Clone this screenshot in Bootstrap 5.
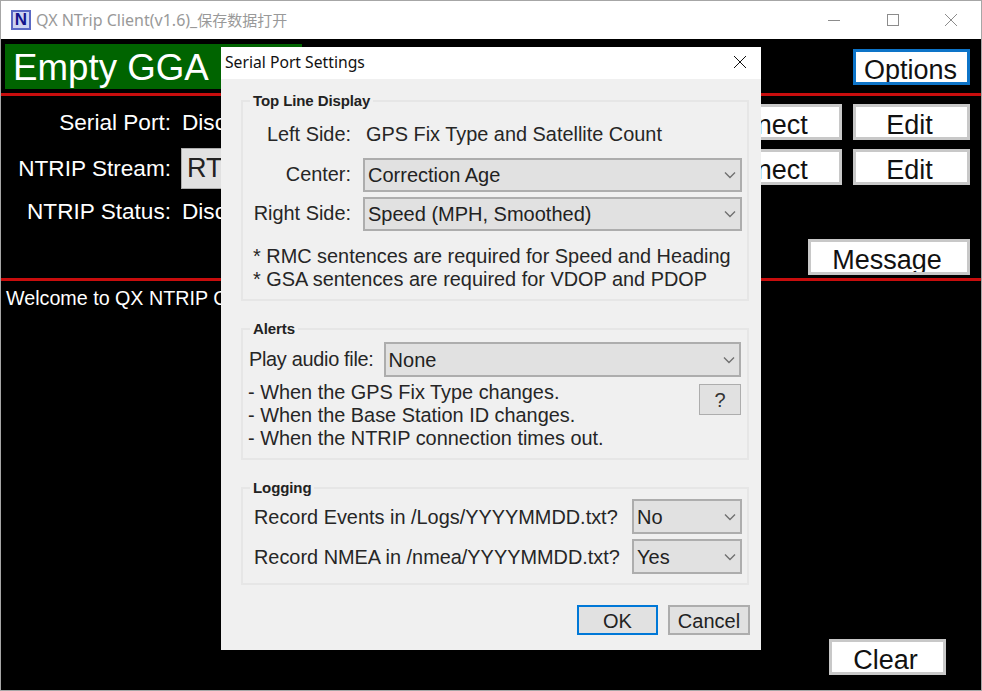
<!DOCTYPE html>
<html lang="en">
<head>
    <meta charset="UTF-8">
    <meta name="viewport" content="width=device-width, initial-scale=1.0">
    <title>QX NTrip Client</title>
    <link href="https://cdn.jsdelivr.net/npm/bootstrap@5.3.2/dist/css/bootstrap.min.css" rel="stylesheet">
    <style>
        html, body { height: 100%; overflow: hidden; background: #000; }
        body { font-family: "Liberation Sans", Arial, sans-serif; }

        /* main window */
        .app-window { width: 982px; height: 691px; border: 1px solid #a6a6a6; position: relative; overflow: hidden; }
        .title-bar { height: 38px; background: #fff; color: #999; font: 16px/36px "Noto Sans", "Noto Sans CJK SC", sans-serif; }
        .title-cjk { font-size: 15px; }
        .app-logo { width: 20px; height: 20px; margin: 0 5px 0 10px; background: #cdd3f2; border: 2px solid #5a68c4; color: #14148c; font: bold 17px/16px "Liberation Sans", sans-serif; text-align: center; }
        .win-controls { gap: 44.5px; padding-right: 23px; }
        .main-area { background: #000; color: #fff; height: 651px; }
        .top-strip { height: 54px; }
        .status-box { width: 297px; height: 45px; margin: 5px 0 0 4px; padding-left: 8px; background: #006400; font-size: 36.7px; line-height: 48px; }
        .red-rule { height: 3px; background: #c80d0d; }
        .info-row { font-size: 22.6px; padding-right: 11px; }
        .info-label { width: 170px; margin-right: 11px; text-align: right; flex-shrink: 0; }
        .text-drop { padding-top: 2px; }
        .serial-row { height: 36px; }
        .stream-row { margin-top: 9px; height: 36px; }
        .stream-label { padding-top: 3px; }
        .stream-box { width: 430px; height: 41px; margin: -1px 0 0 -1px; padding-left: 5px; background: #e1e1e1; border: 1px solid #adadad; color: #222; font-size: 27px; line-height: 38px; }
        .status-row { margin-top: 13px; height: 41px; line-height: 28px; }
        .win-btn { width: 117px; height: 36px; padding: 3px 4px 0 0; background: #fff; border: 3px solid #c8c8c8; border-radius: 0; color: #111; font-size: 27px; line-height: 30px; overflow: hidden; }
        .win-btn-wide { width: 198px; margin-right: 11px; }
        .win-btn-msg { width: 162px; }
        .win-btn-focus { margin: 10px 11px 0 0; padding-right: 2px; border-color: #0d74c8; }
        .msg-rule { margin-top: 3px; }
        .welcome-text { padding: 5px 0 0 5px; font-size: 19.7px; line-height: 24px; }
        .clear-row { margin-top: auto; padding: 0 35px 15px 0; }

        /* settings dialog */
        .settings-dialog { position: absolute; left: 220px; top: 46px; width: 540px; height: 603px; background: #f0f0f0; color: #262626; font-size: 19.9px; }
        .dialog-head { height: 32px; padding: 0 14px 2px 4px; background: #fff; color: #111; font: 15.7px/28px "Noto Sans", sans-serif; }
        .dialog-body { padding: 14px 12px 0 20px; }
        .group-box { width: 508px; min-width: 0; margin-bottom: 20px; padding: 0; border: 2px solid #e6e6e6; }
        .group-box legend { float: none; width: auto; margin: 0 0 0 7px; padding: 0 3px; color: #222; font: bold 15px/16px "Liberation Sans", sans-serif; letter-spacing: -0.1px; }
        .field-line { height: 34px; line-height: 34px; margin-top: 8px; }
        .field-label { text-align: right; flex-shrink: 0; }
        .label-top { width: 108px; }
        .value-top { padding-left: 15px; }
        .top-row { gap: 12px; margin-top: 5px; }
        .top-row-first { margin-top: 7px; }
        .dlg-select { height: 35px; padding: 0 24px 0 3px; background-color: #e1e1e1; background-image: url("data:image/svg+xml,%3csvg xmlns='http://www.w3.org/2000/svg' viewBox='0 0 12 10'%3e%3cpath fill='none' stroke='%23707070' stroke-width='1.4' d='M1 2.5l5 5 5-5'/%3e%3c/svg%3e"); background-position: right 4px center; background-size: 12px 10px; border: 2px solid #adadad; border-radius: 0; color: #222; font-size: 20px; line-height: 30px; }
        .select-top { width: 379px; height: 34px; }
        .select-audio { flex: 1; }
        .select-log { width: 110px; }
        .note-text { line-height: 23px; }
        .note-top { margin-top: 14px; padding: 0 0 8px 10px; }
        .audio-line { padding: 5px 6px 0; gap: 10px; }
        .audio-label { letter-spacing: -0.3px; }
        .alert-notes { padding: 4px 6px 8px 5px; }
        .help-btn { width: 42px; height: 31px; margin: 3px 0 0; padding: 0; background: #e1e1e1; border: 1px solid #adadad; border-radius: 0; color: #333; font-size: 20px; line-height: 28px; }
        .log-line { padding: 5px 5px 0 11px; justify-content: space-between; }
        .log-line-first { padding-top: 3px; }
        .log-line-last { padding-bottom: 9px; }
        .log-label { padding-top: 2px; }
        .dlg-foot { gap: 10px; margin: 1px -1px 0 0; }
        .dlg-btn { width: 82px; height: 30px; padding: 0; background: #e1e1e1; border: 2px solid #adadad; border-radius: 0; color: #222; font-size: 20px; line-height: 28px; }
        .dlg-btn-focus { width: 81px; border-color: #0078d7; }
    </style>
</head>
<body>
    <div class="app-window">
        <!-- Title bar -->
        <div class="title-bar d-flex align-items-center">
            <div class="app-logo">N</div>
            <span>QX NTrip Client(v1.6)_<span class="title-cjk">保存数据打开</span></span>
            <div class="win-controls d-flex align-items-center ms-auto">
                <svg width="14" height="14" viewBox="0 0 14 14"><path d="M1 7.5h12" stroke="#8c8c8c" fill="none"/></svg>
                <svg width="14" height="14" viewBox="0 0 14 14"><rect x="1.5" y="1.5" width="11" height="11" stroke="#8c8c8c" fill="none"/></svg>
                <svg width="14" height="14" viewBox="0 0 14 14"><path d="M1 1l12 12M13 1L1 13" stroke="#8c8c8c" fill="none"/></svg>
            </div>
        </div>

        <div class="main-area d-flex flex-column">
            <div class="top-strip d-flex justify-content-between">
                <div class="status-box">Empty GGA</div>
                <button class="btn win-btn win-btn-focus" type="button">Options</button>
            </div>
            <div class="red-rule"></div>

            <div class="info-row d-flex align-items-center mt-2 serial-row">
                <div class="info-label text-drop">Serial Port:</div>
                <div class="text-drop">Disc</div>
                <button class="btn win-btn win-btn-wide ms-auto" type="button">Disconnect</button>
                <button class="btn win-btn" type="button">Edit</button>
            </div>
            <div class="info-row d-flex align-items-start stream-row">
                <div class="info-label stream-label">NTRIP Stream:</div>
                <div class="stream-box">RT</div>
                <button class="btn win-btn win-btn-wide ms-auto" type="button">Disconnect</button>
                <button class="btn win-btn" type="button">Edit</button>
            </div>
            <div class="info-row d-flex status-row">
                <div class="info-label">NTRIP Status:</div>
                <div>Disc</div>
            </div>
            <div class="info-row d-flex justify-content-end">
                <button class="btn win-btn win-btn-msg" type="button">Message</button>
            </div>
            <div class="red-rule msg-rule"></div>
            <div class="welcome-text">Welcome to QX NTRIP Client</div>
            <div class="clear-row d-flex justify-content-end">
                <button class="btn win-btn" type="button">Clear</button>
            </div>
        </div>

        <!-- Settings dialog -->
        <div class="settings-dialog">
            <div class="dialog-head d-flex justify-content-between align-items-center">
                <span>Serial Port Settings</span>
                <svg width="14" height="14" viewBox="0 0 14 14"><path d="M1 1l12 12M13 1L1 13" stroke="#111" fill="none"/></svg>
            </div>
            <div class="dialog-body">
                <fieldset class="group-box">
                    <legend>Top Line Display</legend>
                    <div class="d-flex field-line">
                        <div class="field-label label-top">Left Side:</div>
                        <div class="value-top">GPS Fix Type and Satellite Count</div>
                    </div>
                    <div class="d-flex align-items-center top-row top-row-first">
                        <div class="field-label label-top">Center:</div>
                        <select class="form-select dlg-select select-top"><option>Correction Age</option></select>
                    </div>
                    <div class="d-flex align-items-center top-row">
                        <div class="field-label label-top">Right Side:</div>
                        <select class="form-select dlg-select select-top"><option>Speed (MPH, Smoothed)</option></select>
                    </div>
                    <div class="note-text note-top">
                        <div>* RMC sentences are required for Speed and Heading</div>
                        <div>* GSA sentences are required for VDOP and PDOP</div>
                    </div>
                </fieldset>

                <fieldset class="group-box">
                    <legend>Alerts</legend>
                    <div class="d-flex align-items-center audio-line">
                        <div class="field-label audio-label">Play audio file:</div>
                        <select class="form-select dlg-select select-audio"><option>None</option></select>
                    </div>
                    <div class="d-flex alert-notes">
                        <div class="note-text">
                            <div>- When the GPS Fix Type changes.</div>
                            <div>- When the Base Station ID changes.</div>
                            <div>- When the NTRIP connection times out.</div>
                        </div>
                        <button class="btn help-btn ms-auto" type="button">?</button>
                    </div>
                </fieldset>

                <fieldset class="group-box">
                    <legend>Logging</legend>
                    <div class="d-flex align-items-center log-line log-line-first">
                        <div class="field-label log-label">Record Events in /Logs/YYYYMMDD.txt?</div>
                        <select class="form-select dlg-select select-log"><option>No</option></select>
                    </div>
                    <div class="d-flex align-items-center log-line log-line-last">
                        <div class="field-label log-label">Record NMEA in /nmea/YYYYMMDD.txt?</div>
                        <select class="form-select dlg-select select-log"><option>Yes</option></select>
                    </div>
                </fieldset>

                <div class="d-flex justify-content-end dlg-foot">
                    <button class="btn dlg-btn dlg-btn-focus" type="button">OK</button>
                    <button class="btn dlg-btn" type="button">Cancel</button>
                </div>
            </div>
        </div>
    </div>
    <script src="https://cdn.jsdelivr.net/npm/bootstrap@5.3.2/dist/js/bootstrap.bundle.min.js"></script>
</body>
</html>
